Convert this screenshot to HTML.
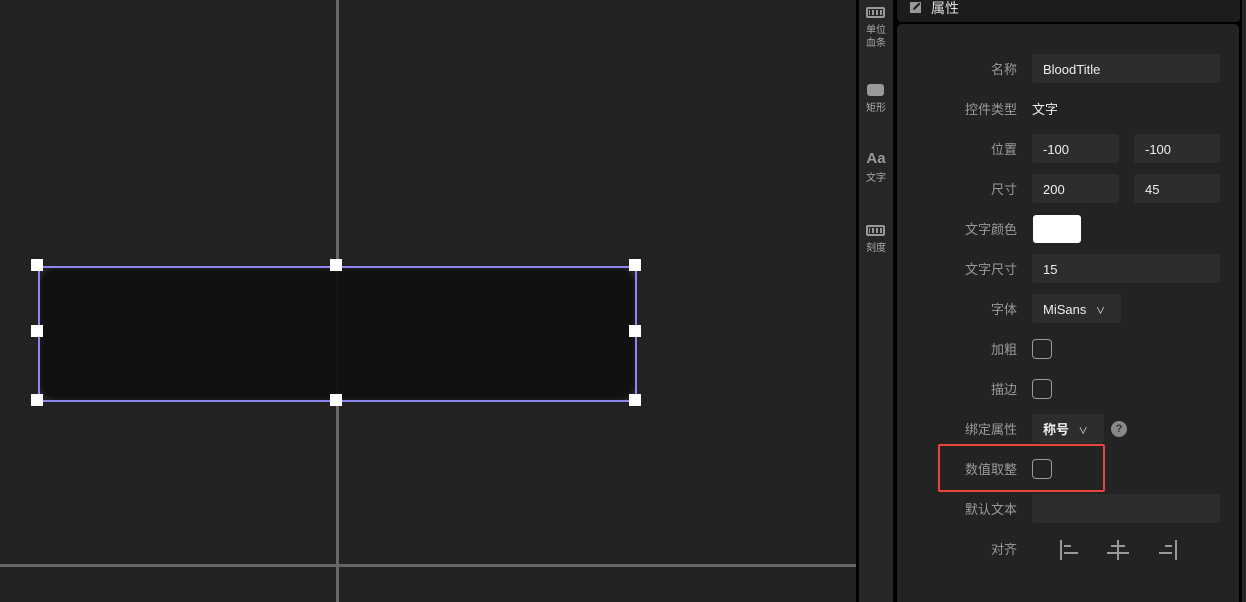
<!DOCTYPE html>
<html><head><meta charset="utf-8"><style>
*{margin:0;padding:0;box-sizing:border-box}
body{width:1246px;height:602px;background:#000;position:relative;overflow:hidden;font-family:"Liberation Sans","Noto Sans CJK SC",sans-serif;font-size:13px}
.a{position:absolute}
.lbl{position:absolute;right:229px;color:#9a9a9a;font-size:13px;line-height:20px;text-align:right;white-space:nowrap}
.inp{position:absolute;background:#2d2d2d;border-radius:3px;color:#eee;font-size:13px;line-height:31px;padding-left:11px;height:29px}
.cb{position:absolute;width:20px;height:20px;border:1px solid #9a9a9a;border-radius:4px}
.ti{position:absolute;left:859px;width:34px;text-align:center;color:#aaa;font-size:10px;line-height:13px}
.h{position:absolute;width:12px;height:12px;background:#fff}
</style></head><body>
<div class="a" style="left:0;top:0;width:856px;height:602px;background:#222"></div>
<div class="a" style="left:336px;top:0;width:3px;height:602px;background:#666"></div>
<div class="a" style="left:0;top:564px;width:856px;height:3px;background:#666"></div>
<div class="a" style="left:38px;top:266px;width:599px;height:136px;border:2px solid #8c87f0"></div>
<div class="a" style="left:40px;top:268px;width:595px;height:132px;background:#111;border-radius:16px;box-shadow:inset 0 0 6px #222"></div>
<div class="a" style="left:336px;top:268px;width:3px;height:132px;background:#151515"></div>
<div class="h" style="left:31px;top:259px"></div><div class="h" style="left:330px;top:259px"></div><div class="h" style="left:629px;top:259px"></div>
<div class="h" style="left:31px;top:325px"></div><div class="h" style="left:629px;top:325px"></div>
<div class="h" style="left:31px;top:394px"></div><div class="h" style="left:330px;top:394px"></div><div class="h" style="left:629px;top:394px"></div>

<div class="a" style="left:859px;top:0;width:34px;height:602px;background:#262626"></div>
<div class="a" style="left:866px;top:7px;width:19px;height:11px;border:2px solid #999;border-radius:2px;background:repeating-linear-gradient(90deg,#999 0 2px,transparent 2px 4px);background-clip:content-box;padding:1px"></div>
<div class="ti" style="top:24px">单位<br>血条</div>
<div class="a" style="left:867px;top:84px;width:17px;height:12px;background:#999;border-radius:3px"></div>
<div class="ti" style="top:102px">矩形</div>
<div class="ti" style="top:152px;font-size:15px;font-weight:bold;color:#999">Aa</div>
<div class="ti" style="top:172px">文字</div>
<div class="a" style="left:866px;top:225px;width:19px;height:11px;border:2px solid #999;border-radius:2px;background:repeating-linear-gradient(90deg,#999 0 2px,transparent 2px 4px);background-clip:content-box;padding:1px"></div>
<div class="ti" style="top:242px">刻度</div>

<div class="a" style="left:897px;top:0;width:343px;height:22px;background:#1c1c1c;border-radius:0 0 4px 4px"></div>
<svg class="a" style="left:910px;top:1px" width="12" height="12" viewBox="0 0 12 12"><rect x="0" y="1" width="11" height="11" fill="#999"/><path d="M3 9 L3.5 7 L9 1.5 L10.5 3 L5 8.5 Z" fill="#1c1c1c"/></svg>
<div class="a" style="left:931px;top:-2px;color:#ddd;font-size:14px;line-height:20px">属性</div>
<div class="a" style="left:897px;top:24px;width:342px;height:578px;background:#232323;border-radius:5px 5px 0 0"></div>
<div class="a" style="left:1242px;top:0;width:4px;height:602px;background:#262626"></div>

<div class="lbl" style="top:60px">名称</div><div class="inp" style="left:1032px;top:54px;width:188px">BloodTitle</div>
<div class="lbl" style="top:100px">控件类型</div><div class="a" style="left:1032px;top:100px;color:#eee;line-height:20px">文字</div>
<div class="lbl" style="top:140px">位置</div><div class="inp" style="left:1032px;top:134px;width:87px">-100</div><div class="inp" style="left:1134px;top:134px;width:86px">-100</div>
<div class="lbl" style="top:180px">尺寸</div><div class="inp" style="left:1032px;top:174px;width:87px">200</div><div class="inp" style="left:1134px;top:174px;width:86px">45</div>
<div class="lbl" style="top:220px">文字颜色</div><div class="a" style="left:1033px;top:215px;width:48px;height:28px;background:#fff;border-radius:3px"></div>
<div class="lbl" style="top:260px">文字尺寸</div><div class="inp" style="left:1032px;top:254px;width:188px">15</div>
<div class="lbl" style="top:300px">字体</div><div class="inp" style="left:1032px;top:294px;width:89px">MiSans <span style="font-size:9px;margin-left:6px">&#8744;</span></div>
<div class="lbl" style="top:340px">加粗</div><div class="cb" style="left:1032px;top:339px"></div>
<div class="lbl" style="top:380px">描边</div><div class="cb" style="left:1032px;top:379px"></div>
<div class="lbl" style="top:420px">绑定属性</div><div class="inp" style="left:1032px;top:414px;width:72px;font-weight:bold">称号 <span style="font-size:9px;margin-left:6px;font-weight:normal">&#8744;</span></div>
<div class="a" style="left:1111px;top:421px;width:16px;height:16px;border-radius:50%;background:#888;color:#333;font-size:11px;font-weight:bold;text-align:center;line-height:16px">?</div>
<div class="a" style="left:938px;top:444px;width:167px;height:48px;border:2px solid #e8453c;border-radius:2px"></div>
<div class="lbl" style="top:460px">数值取整</div><div class="cb" style="left:1032px;top:459px"></div>
<div class="lbl" style="top:500px">默认文本</div><div class="inp" style="left:1032px;top:494px;width:188px"></div>
<div class="lbl" style="top:540px">对齐</div>
<div class="a" style="left:1060px;top:540px;width:2px;height:20px;background:#999"></div>
<div class="a" style="left:1064px;top:545px;width:7px;height:2px;background:#999"></div><div class="a" style="left:1064px;top:552px;width:14px;height:2px;background:#999"></div>
<div class="a" style="left:1117px;top:540px;width:2px;height:20px;background:#999"></div>
<div class="a" style="left:1111px;top:545px;width:14px;height:2px;background:#999"></div><div class="a" style="left:1107px;top:552px;width:22px;height:2px;background:#999"></div>
<div class="a" style="left:1175px;top:540px;width:2px;height:20px;background:#999"></div>
<div class="a" style="left:1165px;top:545px;width:7px;height:2px;background:#999"></div><div class="a" style="left:1159px;top:552px;width:13px;height:2px;background:#999"></div>
</body></html>
